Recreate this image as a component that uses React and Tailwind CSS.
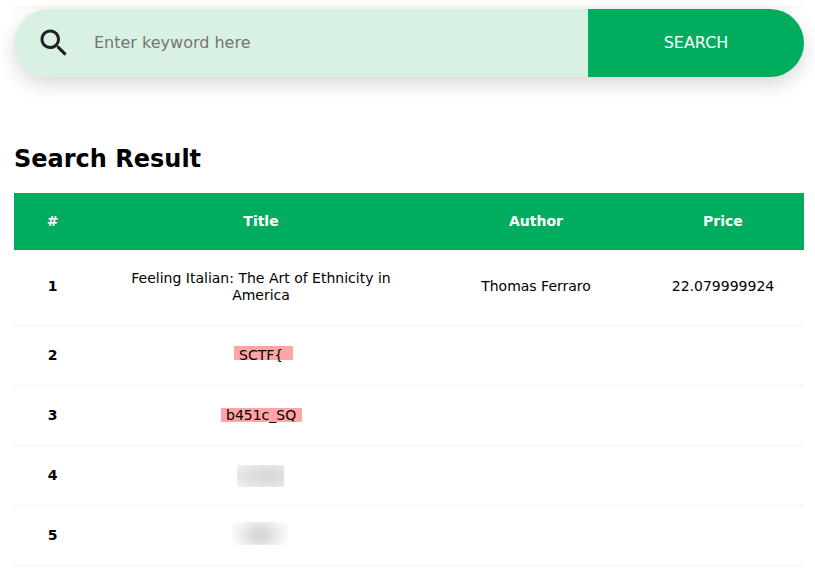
const cols = "grid grid-cols-[77px_340px_210px_163px] items-center text-center";

const rows = [
  {
    id: 1,
    title: "Feeling Italian: The Art of Ethnicity in America",
    author: "Thomas Ferraro",
    price: "22.079999924",
  },
  {
    id: 2,
    title: (
      <span className="block h-[14px] w-[59px] bg-[#ffa5a5] pl-[5px] text-left leading-[18px]">
        SCTF&#123;
      </span>
    ),
    box: "pt-[19px] pl-[143px]",
  },
  {
    id: 3,
    title: (
      <span className="block h-[14px] w-[81px] bg-[#ffa5a5] pl-[5px] text-left leading-[14px]">
        b451c_SQ
      </span>
    ),
    box: "pt-[21px] pl-[130px]",
  },
  {
    id: 4,
    title: (
      <span className="block h-[22px] w-[47px] rounded-[2px] bg-[radial-gradient(ellipse_at_65%_50%,#d8d8d8_0%,#dedede_40%,#f0f0f0_100%)]" />
    ),
    box: "pt-[18px] pl-[146px]",
  },
  {
    id: 5,
    title: (
      <span className="block h-[23px] w-[56px] bg-[radial-gradient(ellipse_28px_20px_at_50%_55%,#d6d6d5_0%,#dededd_35%,#eeeeed_70%,#fafafa_100%)]" />
    ),
    box: "pt-[15px] pl-[141px]",
  },
];

function SearchBar() {
  return (
    <form className="flex h-[68px] overflow-hidden rounded-full bg-[#d9f1e3] shadow-[0_8px_20px_rgba(0,0,0,0.15)]">
      <div className="flex w-[80px] items-center pl-[22px]">
        <svg viewBox="0 0 24 24" className="size-9 fill-[#212121]">
          <path d="M15.5 14h-.79l-.28-.27C15.41 12.59 16 11.11 16 9.5 16 5.91 13.09 3 9.5 3S3 5.91 3 9.5 5.91 16 9.5 16c1.61 0 3.09-.59 4.23-1.57l.27.28v.79l5 4.99L20.49 19l-4.99-5zm-6 0C7.01 14 5 11.99 5 9.5S7.01 5 9.5 5 14 7.01 14 9.5 11.99 14 9.5 14z" />
        </svg>
      </div>
      <input
        className="min-w-0 flex-1 bg-transparent text-base outline-none placeholder:text-[#757575]"
        placeholder="Enter keyword here"
      />
      <button type="button" className="w-[216px] bg-[#00ad5f] text-base text-white">
        SEARCH
      </button>
    </form>
  );
}

export default function App() {
  return (
    <main className="h-[573px] w-[815px] overflow-hidden bg-white pl-[14px] pt-[6px] font-['DejaVu_Sans',sans-serif] text-black">
      <div className="w-[790px]">
        <div className="h-[3px] bg-[#f8f9fd]" />
        <SearchBar />
        <h2 className="mt-[68px] text-2xl font-bold leading-[28px]">Search Result</h2>
        <div className="mt-[20px] text-sm leading-[17px]">
          <div className={`${cols} h-[57px] bg-[#00ad5f] font-bold text-white`}>
            <div>#</div>
            <div>Title</div>
            <div>Author</div>
            <div className="pl-px">Price</div>
          </div>
          {rows.map((row) => (
            <div
              key={row.id}
              className={`${cols} border-b-[3px] border-[#f8f9fd] ${row.id === 1 ? "h-[77px]" : "h-[60px]"}`}
            >
              <div className={row.id === 1 ? "pb-[2px] font-bold" : "font-bold"}>{row.id}</div>
              <div className={row.box ? `h-full ${row.box}` : "px-[30px]"}>{row.title}</div>
              <div className="pb-[2px]">{row.author}</div>
              <div className="pb-[2px] pl-px">{row.price}</div>
            </div>
          ))}
        </div>
      </div>
    </main>
  );
}
